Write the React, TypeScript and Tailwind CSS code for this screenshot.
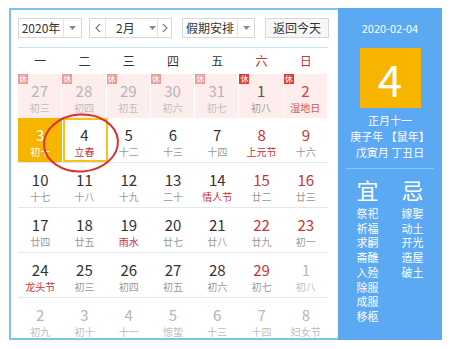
import React from "react";

type Cell = {
  d: string;
  l: string;
  other?: boolean;
  red?: boolean;
  fest?: boolean;
  rest?: boolean;
  today?: boolean;
  sel?: boolean;
};

const rows: Cell[][] = [
  [
    { d: "27", l: "初三", other: true, rest: true },
    { d: "28", l: "初四", other: true, rest: true },
    { d: "29", l: "初五", other: true, rest: true },
    { d: "30", l: "初六", other: true, rest: true },
    { d: "31", l: "初七", other: true, rest: true },
    { d: "1", l: "初八", rest: true, red: true },
    { d: "2", l: "湿地日", rest: true, red: true, fest: true },
  ],
  [
    { d: "3", l: "初十", today: true },
    { d: "4", l: "立春", sel: true, fest: true },
    { d: "5", l: "十二" },
    { d: "6", l: "十三" },
    { d: "7", l: "十四" },
    { d: "8", l: "上元节", red: true, fest: true },
    { d: "9", l: "十六", red: true },
  ],
  [
    { d: "10", l: "十七" },
    { d: "11", l: "十八" },
    { d: "12", l: "十九" },
    { d: "13", l: "二十" },
    { d: "14", l: "情人节", fest: true },
    { d: "15", l: "廿二", red: true },
    { d: "16", l: "廿三", red: true },
  ],
  [
    { d: "17", l: "廿四" },
    { d: "18", l: "廿五" },
    { d: "19", l: "雨水", fest: true },
    { d: "20", l: "廿七" },
    { d: "21", l: "廿八" },
    { d: "22", l: "廿九", red: true },
    { d: "23", l: "初一", red: true },
  ],
  [
    { d: "24", l: "龙头节", fest: true },
    { d: "25", l: "初三" },
    { d: "26", l: "初四" },
    { d: "27", l: "初五" },
    { d: "28", l: "初六" },
    { d: "29", l: "初七", red: true },
    { d: "1", l: "初八", other: true },
  ],
  [
    { d: "2", l: "初九", other: true },
    { d: "3", l: "初十", other: true },
    { d: "4", l: "十一", other: true },
    { d: "5", l: "惊蛰", other: true },
    { d: "6", l: "十三", other: true },
    { d: "7", l: "十四", other: true },
    { d: "8", l: "妇女节", other: true },
  ],
];

const weekdays = ["一", "二", "三", "四", "五", "六", "日"];
const yi = ["祭祀", "祈福", "求嗣", "斋醮", "入殓", "除服", "成服", "移柩"];
const ji = ["嫁娶", "动土", "开光", "造屋", "破土"];

function Caret() {
  return (
    <svg width="7" height="4" viewBox="0 0 7 4">
      <path d="M0 0 L7 0 L3.5 4 Z" fill="#8a8a8a" />
    </svg>
  );
}

function Chevron({ right }: { right?: boolean }) {
  return (
    <svg width="6" height="10" viewBox="0 0 6 10">
      <path
        d={right ? "M1 1 L5 5 L1 9" : "M5 1 L1 5 L5 9"}
        fill="none"
        stroke="#777"
        strokeWidth="1.1"
      />
    </svg>
  );
}

function DayCell({ c, row }: { c: Cell; row: number }) {
  let bg = "";
  if (row === 0) bg = "bg-[#fdeded] border-r border-white";
  if (c.today) bg = "bg-[#f7b500]";
  let numColor = "text-[#333]";
  let lunColor = "text-[#999]";
  if (c.red) numColor = "text-[#c8323a]";
  if (c.fest) lunColor = "text-[#c8323a]";
  if (c.other) {
    numColor = "text-[#b5b5b5]";
    lunColor = "text-[#bdbdbd]";
  }
  if (row === 0 && !c.other) {
    numColor = c.red && c.d === "2" ? "text-[#c8423f]" : "text-[#555]";
    lunColor = c.fest ? "text-[#cf5a55]" : "text-[#999]";
  }
  if (c.today) {
    numColor = "text-white";
    lunColor = "text-white";
  }
  return (
    <div className={`relative h-[44px] flex flex-col items-center ${bg}`}>
      {c.sel && (
        <div className="absolute left-[1px] right-[-1px] top-0 bottom-0 border-2 border-[#f3c21f]" />
      )}
      {c.rest && (
        <div
          className={`absolute left-0 top-0 w-[10px] h-[10px] flex items-center justify-center text-[8px] leading-none text-white ${
            c.other ? "bg-[#eb9a98]" : "bg-[#dd3b35]"
          }`}
        >
          休
        </div>
      )}
      <div className={`mt-[7px] text-[15px] leading-[20px] ${numColor}`}>{c.d}</div>
      <div className={`mt-[1px] text-[10px] leading-[12px] ${lunColor}`}>{c.l}</div>
    </div>
  );
}

export default function App() {
  return (
    <div
      className="w-[450px] h-[349px] bg-white relative"
      style={{ fontFamily: "'Noto Sans CJK SC', 'Noto Sans', sans-serif" }}
    >
      <div className="absolute left-[9px] top-[8px] w-[433px] h-[332px] flex">
        {/* left panel */}
        <div className="w-[329px] h-full border-l-2 border-t-2 border-b-2 border-[#7cc3ee] pl-[7px] pt-[8px] relative">
          {/* toolbar */}
          <div className="flex items-center h-[20px] text-[12px] text-[#333]">
            <div className="w-[64px] h-[20px] border border-[#d8d8d8] flex">
              <div className="flex-1 flex items-center justify-center leading-none">2020年</div>
              <div className="w-[18px] border-l border-[#e2e2e2] flex items-center justify-center">
                <Caret />
              </div>
            </div>
            <div className="ml-[7px] w-[83px] h-[20px] border border-[#d8d8d8] flex">
              <div className="w-[16px] border-r border-[#e2e2e2] flex items-center justify-center">
                <Chevron />
              </div>
              <div className="flex-1 flex items-center pl-[10px] leading-none">
                2月
                <span className="ml-[14px] flex">
                  <Caret />
                </span>
              </div>
              <div className="w-[14px] border-l border-[#e2e2e2] flex items-center justify-center">
                <Chevron right />
              </div>
            </div>
            <div className="ml-[10px] w-[73px] h-[20px] border border-[#d8d8d8] flex">
              <div className="flex-1 flex items-center justify-center leading-none">假期安排</div>
              <div className="w-[17px] border-l border-[#e2e2e2] flex items-center justify-center">
                <Caret />
              </div>
            </div>
            <div className="ml-[10px] w-[64px] h-[20px] border border-[#d8d8d8] bg-[#f7f7f7] flex items-center justify-center leading-none">
              返回今天
            </div>
          </div>
          {/* divider */}
          <div className="mt-[9px] w-[310px] h-px bg-[#c3e1f5]" />
          {/* weekdays */}
          <div className="grid grid-cols-7 w-[310px] h-[26px] items-center text-[12px]">
            {weekdays.map((w, i) => (
              <div key={w} className={`text-center ${i >= 5 ? "text-[#c8323a]" : "text-[#333]"}`}>
                {w}
              </div>
            ))}
          </div>
          {/* days */}
          <div className="w-[310px] relative">
            {rows.map((r, ri) => (
              <div
                key={ri}
                className={`grid grid-cols-7 ${ri >= 1 && ri <= 4 ? "border-b border-[#e6e6e6]" : ""}`}
              >
                {r.map((c, ci) => (
                  <DayCell key={ci} c={c} row={ri} />
                ))}
              </div>
            ))}
            <svg
              className="absolute left-[22px] top-[38px] pointer-events-none"
              width="84"
              height="64"
              viewBox="0 0 84 64"
            >
              <ellipse
                cx="41"
                cy="31"
                rx="37"
                ry="28.5"
                fill="none"
                stroke="#d8332c"
                strokeWidth="2"
                transform="rotate(-4 41 31)"
              />
            </svg>
          </div>
        </div>
        {/* right panel */}
        <div className="flex-1 h-full bg-[#5ba8f3] flex flex-col items-center text-white">
          <div className="mt-[13px] text-[11px] leading-[14px]">2020-02-04</div>
          <div className="mt-[13px] w-[61px] h-[60px] bg-[#f8b500] flex items-center justify-center text-[44px] leading-none">
            4
          </div>
          <div className="mt-[4px] text-[11px] leading-[16px] flex flex-col items-center">
            <div>正月十一</div>
            <div>庚子年 【鼠年】</div>
            <div>戊寅月 丁丑日</div>
          </div>
          <div className="mt-[8px] w-[88px] h-px bg-[#8cc5f8]" />
          <div className="mt-[7px] flex gap-[19px]">
            <div className="flex flex-col items-center w-[26px]">
              <div className="text-[22px] leading-[26px]">宜</div>
              <div className="mt-[4px] text-[11px] leading-[14.7px] flex flex-col items-center">
                {yi.map((t) => (
                  <div key={t}>{t}</div>
                ))}
              </div>
            </div>
            <div className="flex flex-col items-center w-[26px]">
              <div className="text-[22px] leading-[26px]">忌</div>
              <div className="mt-[4px] text-[11px] leading-[14.7px] flex flex-col items-center">
                {ji.map((t) => (
                  <div key={t}>{t}</div>
                ))}
              </div>
            </div>
          </div>
        </div>
      </div>
    </div>
  );
}
